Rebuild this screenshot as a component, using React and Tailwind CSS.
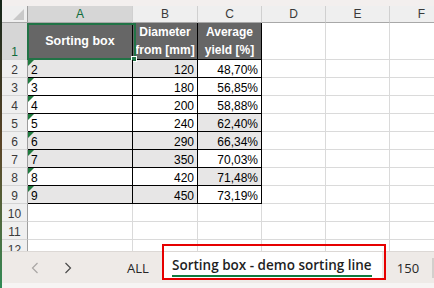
import React from "react";

const rows = [
  { a: "2", b: "120", c: "48,70%", ga: true, gc: false },
  { a: "3", b: "180", c: "56,85%", ga: false, gc: false },
  { a: "4", b: "200", c: "58,88%", ga: false, gc: false },
  { a: "5", b: "240", c: "62,40%", ga: false, gc: true },
  { a: "6", b: "290", c: "66,34%", ga: true, gc: true },
  { a: "7", b: "350", c: "70,03%", ga: true, gc: false },
  { a: "8", b: "420", c: "71,48%", ga: false, gc: true },
  { a: "9", b: "450", c: "73,19%", ga: true, gc: false },
];

const font = { fontFamily: '"Liberation Sans", Arial, sans-serif' };
const uiFont = { fontFamily: '"Open Sans", "Liberation Sans", sans-serif' };

function RowHead({ n, active }) {
  return (
    <div
      className={`flex items-end justify-center border-r border-b border-r-[#9e9e9e] border-b-[#d4d4d4] text-[12px] leading-[14px] ${
        active ? "bg-[#d6d6d6] text-[#0f6b3a]" : "bg-[#efefef] text-[#3a3a3a]"
      }`}
    >
      {n}
    </div>
  );
}

function Empty() {
  return <div className="border-r border-b border-[#dadada] bg-white" />;
}

function ColHead({ l, active }) {
  return (
    <div
      className={`flex items-center justify-center border-r border-b border-r-[#d0d0d0] border-b-[#a8a8a8] text-[12px] leading-[14px] ${
        active ? "bg-[#d6d6d6] text-[#0f6b3a]" : "bg-[#efefef] text-[#3a3a3a]"
      }`}
    >
      {l}
    </div>
  );
}

export default function App() {
  return (
    <div className="relative w-[434px] h-[288px] overflow-hidden flex bg-white" style={font}>
      <div className="w-[2px] shrink-0 bg-gradient-to-b from-[#14261a] via-[#5b4528] to-[#2e8a55]" />
      <div className="flex-1 min-w-0 flex flex-col">
        <div className="h-[6px] bg-[#f3efee]" />
        <div className="h-[245px] overflow-hidden">
          <div className="grid grid-cols-[26px_105px_65px_64px_64px_64px_64px] grid-rows-[17px_37px_repeat(11,18px)] w-[452px]">
            {/* header row */}
            <div className="relative bg-[#efefef] border-r border-b border-r-[#9e9e9e] border-b-[#a8a8a8]">
              <div className="absolute right-[3px] bottom-[2px] w-0 h-0 border-l-[11px] border-l-transparent border-b-[11px] border-b-[#c9c9c9]" />
            </div>
            <ColHead l="A" active />
            <ColHead l="B" />
            <ColHead l="C" />
            <ColHead l="D" />
            <ColHead l="E" />
            <ColHead l="F" />

            {/* row 1 */}
            <RowHead n="1" active />
            <div className="relative flex items-center justify-center bg-[#666666] border-r border-b border-black text-white font-bold text-[12.5px] leading-[18px]">
              Sorting box
              <div className="absolute -left-[1px] top-0 w-[109px] h-[37px] border-2 border-[#217346]" />
              <div className="absolute left-[103px] top-[33px] w-[6px] h-[6px] bg-[#217346] border border-white" />
            </div>
            <div className="flex items-center justify-center text-center bg-[#666666] border-r border-b border-black text-white font-bold text-[12px] leading-[18px] whitespace-nowrap">
              Diameter
              <br />
              from [mm]
            </div>
            <div className="flex items-center justify-center text-center bg-[#666666] border-r border-b border-black text-white font-bold text-[12px] leading-[18px] whitespace-nowrap">
              Average
              <br />
              yield [%]
            </div>
            <Empty />
            <Empty />
            <Empty />

            {rows.map((r) => (
              <React.Fragment key={r.a}>
                <RowHead n={r.a} />
                <div
                  className={`relative flex items-end pl-[3px] border-r border-b border-black text-[12px] leading-[14px] text-black ${
                    r.ga ? "bg-[#e7e6e6]" : "bg-white"
                  }`}
                >
                  <div className="absolute left-0 top-0 w-0 h-0 border-t-[6px] border-t-[#1f7a3e] border-r-[6px] border-r-transparent" />
                  {r.a}
                </div>
                <div
                  className={`flex items-end justify-end pr-[3px] border-r border-b border-black text-[12px] leading-[14px] text-black ${
                    r.ga ? "bg-[#e7e6e6]" : "bg-white"
                  }`}
                >
                  {r.b}
                </div>
                <div
                  className={`flex items-end justify-end pr-[3px] border-r border-b border-black text-[12px] leading-[14px] text-black ${
                    r.gc ? "bg-[#e7e6e6]" : "bg-white"
                  }`}
                >
                  {r.c}
                </div>
                <Empty />
                <Empty />
                <Empty />
              </React.Fragment>
            ))}

            {["10", "11", "12"].map((n) => (
              <React.Fragment key={n}>
                <RowHead n={n} />
                <Empty />
                <Empty />
                <Empty />
                <Empty />
                <Empty />
                <Empty />
              </React.Fragment>
            ))}
          </div>
        </div>

        {/* tab bar */}
        <div className="h-[32px] bg-[#eeeae7] border-t border-[#dcd8d5] flex items-start">
          <div className="ml-[29px] mt-[10px] w-[8px] h-[12px] flex items-center">
            <svg width="8" height="12" viewBox="0 0 8 12">
              <path d="M6.5 1 L1.5 6 L6.5 11" fill="none" stroke="#a9a6a4" strokeWidth="1.2" />
            </svg>
          </div>
          <div className="ml-[25px] mt-[10px] w-[8px] h-[12px] flex items-center">
            <svg width="8" height="12" viewBox="0 0 8 12">
              <path d="M1.5 1 L6.5 6 L1.5 11" fill="none" stroke="#4a4a4a" strokeWidth="1.2" />
            </svg>
          </div>
          <div className="ml-[55px] mt-[8px] text-[13px] leading-[16px] text-[#262626]" style={uiFont}>
            ALL
          </div>
          <div className="ml-[13px] w-[220px] h-[28px] bg-white flex flex-col items-center">
            <div
              className="mt-[5px] text-[13.5px] leading-[16px] font-semibold text-[#1f1f1f] border-b-2 border-[#107c41] pb-[2px] whitespace-nowrap"
              style={uiFont}
            >
              Sorting box - demo sorting line
            </div>
          </div>
          <div className="ml-[15px] mt-[8px] text-[13px] leading-[16px] text-[#262626]" style={uiFont}>
            150
          </div>
          <div className="ml-auto mt-[6px] w-[2px] h-[20px] bg-[#d2cfcc]" />
        </div>
        <div className="h-[5px] bg-[#f6f4f3]" />
      </div>

      {/* red annotation box */}
      <div className="absolute left-[162px] top-[244px] w-[224px] h-[36px] border-2 border-[#e60000]" />
    </div>
  );
}
